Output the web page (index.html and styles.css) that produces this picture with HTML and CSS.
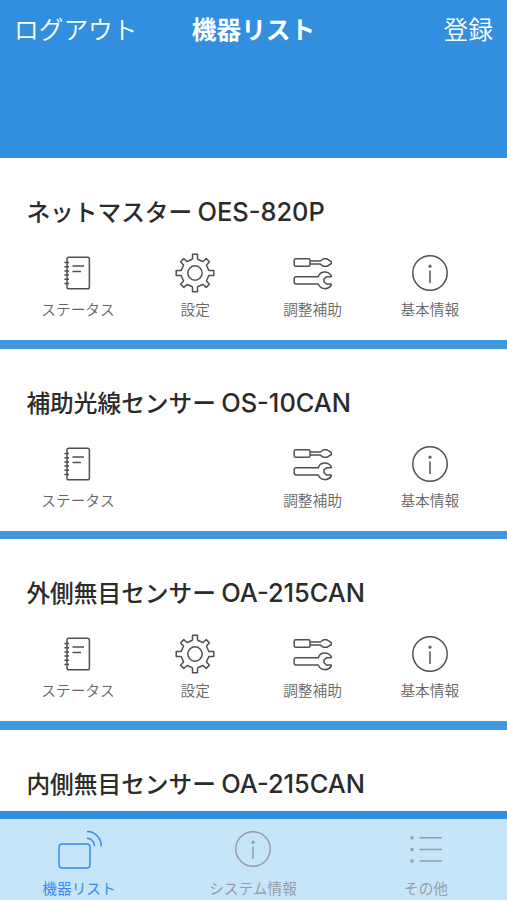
FILE: index.html
```
<!DOCTYPE html>
<html lang="ja">
<head>
<meta charset="utf-8">
<title>機器リスト</title>
<link rel="stylesheet" href="styles.css">
</head>
<body>
<svg class="defs" aria-hidden="true">
  <symbol id="note" viewBox="0 0 40 40">
    <rect x="9" y="4.2" width="22.4" height="31.6" rx="1.8"/>
    <path d="M6.400 9.5h4.6M6.400 13.7h4.6M6.400 17.9h4.6M6.400 22.1h4.6M6.400 26.3h4.6M6.400 30.5h4.6M14.5 13h11.500M14.5 18.500h8.500"/>
  </symbol>
  <symbol id="gear" viewBox="0 0 40 40">
    <g transform="translate(20 20)">
      <circle r="7.200"/>
      <path d="M-3.200-13.500L-2.500-14V-18.800H2.500V-14L3.200-13.500L7.200-11.700L8-11.500L11.200-14.400L14.400-11.200L11.500-8L11.700-7.200L13.500-3.200L14-2.500H18.800V2.500H14L13.500 3.200L11.700 7.200L11.500 8L14.400 11.200L11.200 14.400L8 11.500L7.200 11.700L3.200 13.500L2.500 14V18.800H-2.500V14L-3.200 13.500L-7.200 11.700L-8 11.500L-11.200 14.400L-14.400 11.200L-11.500 8L-11.700 7.200L-13.500 3.200L-14 2.500H-18.800V-2.500H-14L-13.500-3.200L-11.700-7.200L-11.500-8L-14.400-11.200L-11.200-14.400L-8-11.500L-7.200-11.700Z"/>
    </g>
  </symbol>
  <symbol id="tools" viewBox="0 0 40 40">
    <rect x="1.200" y="5.700" width="15.800" height="7.500" rx="1.500"/>
    <path d="M17 8H27.300L30.500 5.800H34L38.300 8.600V10.500L34 13.300H30.500L27.300 11.100H17"/>
    <path d="M3.200 23.800H25.300C27 18.200 34.500 17.200 38.200 22.500V23.800H33.500L31 25.800V28.800L33.500 31H38.200V32.200C34.500 37.400 27.500 36.500 25.300 31H3.200Q1.200 31 1.200 29V25.800Q1.200 23.800 3.200 23.800Z"/>
  </symbol>
  <symbol id="info" viewBox="0 0 40 40">
    <circle cx="20" cy="20" r="17.200"/>
    <path d="M20 17.500V30"/>
    <circle class="dot" cx="20" cy="13.200" r="1.600"/>
  </symbol>
  <symbol id="device" viewBox="0 0 50 44">
    <rect x="5" y="14.900" width="31" height="24" rx="3"/>
    <path d="M33 9.200C37 9.200 40.500 12.500 40.500 17.300M33 2.500C41 2.500 47.200 8.800 47.200 17.300"/>
  </symbol>
  <symbol id="list" viewBox="0 0 40 40">
    <path d="M13.500 8.700H36M13.500 20.400H36M13.500 32H36"/>
    <path class="dot" d="M4.500 7.200h3v3h-3zM4.500 18.900h3v3h-3zM4.500 30.500h3v3h-3z"/>
  </symbol>
</svg>
<div class="app">
  <header class="nav">
    <a class="nav-link">ログアウト</a>
    <h1 class="nav-title">機器リスト</h1>
    <a class="nav-link nav-right">登録</a>
  </header>
  <main class="cards">
    <section class="card">
      <h2 class="name">ネットマスター <span class="model">OES-820P</span></h2>
      <div class="actions">
        <div class="action"><svg class="icon"><use href="#note"/></svg><span>ステータス</span></div>
        <div class="action"><svg class="icon"><use href="#gear"/></svg><span>設定</span></div>
        <div class="action"><svg class="icon"><use href="#tools"/></svg><span>調整補助</span></div>
        <div class="action"><svg class="icon"><use href="#info"/></svg><span>基本情報</span></div>
      </div>
    </section>
    <section class="card">
      <h2 class="name">補助光線センサー <span class="model">OS-10CAN</span></h2>
      <div class="actions">
        <div class="action"><svg class="icon"><use href="#note"/></svg><span>ステータス</span></div>
        <div class="action"></div>
        <div class="action"><svg class="icon"><use href="#tools"/></svg><span>調整補助</span></div>
        <div class="action"><svg class="icon"><use href="#info"/></svg><span>基本情報</span></div>
      </div>
    </section>
    <section class="card">
      <h2 class="name">外側無目センサー <span class="model">OA-215CAN</span></h2>
      <div class="actions">
        <div class="action"><svg class="icon"><use href="#note"/></svg><span>ステータス</span></div>
        <div class="action"><svg class="icon"><use href="#gear"/></svg><span>設定</span></div>
        <div class="action"><svg class="icon"><use href="#tools"/></svg><span>調整補助</span></div>
        <div class="action"><svg class="icon"><use href="#info"/></svg><span>基本情報</span></div>
      </div>
    </section>
    <section class="card card-last">
      <h2 class="name">内側無目センサー <span class="model">OA-215CAN</span></h2>
    </section>
  </main>
  <footer class="tabs">
    <div class="tab tab-active"><svg class="tab-icon tab-icon-wide"><use href="#device"/></svg><span>機器リスト</span></div>
    <div class="tab"><svg class="tab-icon"><use href="#info"/></svg><span>システム情報</span></div>
    <div class="tab"><svg class="tab-icon"><use href="#list"/></svg><span>その他</span></div>
  </footer>
</div>
</body>
</html>
```
FILE: styles.css
```
* { box-sizing: border-box; }
body {
  margin: 0;
  font-family: "Noto Sans CJK JP", sans-serif;
  overflow: hidden;
}
.defs { display: none; }
.app {
  height: 900px;
  display: flex;
  flex-direction: column;
  background: #328fdf;
}
.nav {
  height: 158px;
  flex: none;
  display: grid;
  grid-template-columns: 1fr auto 1fr;
  align-items: start;
  padding: 10px 14px 0;
  line-height: 36px;
  color: #fff;
}
.nav-link {
  font-size: 24.7px;
  font-weight: 350;
}
.nav-right { text-align: right; }
.nav-title {
  margin: 0;
  font-size: 24.7px;
  font-weight: 700;
}
.cards {
  flex: none;
  display: flex;
  flex-direction: column;
  gap: 8.5px;
  background: #4298df;
}
.card {
  height: 182px;
  padding: 35px 18.6px 0 19.4px;
  background: #fff;
}
.card-last { height: 81.5px; }
.name {
  margin: 0;
  padding-left: 7px;
  font-size: 23.7px;
  font-weight: 500;
  line-height: 36px;
  color: #2b2b2b;
  white-space: nowrap;
}
.model {
  font-family: Inter, sans-serif;
  font-size: 25.4px;
  font-weight: 500;
}
.actions {
  display: grid;
  grid-template-columns: repeat(4, 1fr);
  padding-top: 23px;
}
.action {
  display: flex;
  flex-direction: column;
  align-items: center;
  gap: 5px;
  font-size: 14.7px;
  font-weight: 350;
  line-height: 22px;
  color: #666;
}
.icon, .tab-icon {
  width: 40px;
  height: 40px;
  fill: none;
  stroke: #505054;
  stroke-width: 1.5;
  stroke-linejoin: round;
}
.dot { fill: currentColor; stroke: none; }
.tabs {
  flex: 1;
  margin-top: 8px;
  display: grid;
  grid-template-columns: 158px 190px 1fr;
  padding-top: 10px;
  background: #c7e5f8;
}
.tab {
  display: flex;
  flex-direction: column;
  align-items: center;
  gap: 8px;
  font-size: 14.7px;
  line-height: 22px;
  color: #979ea4;
}
.tab:last-child { padding-right: 3px; }
.tab-icon { stroke: currentColor; }
.tab-icon-wide { width: 50px; height: 44px; margin-bottom: -4px; }
.tab-active { color: #3989f5; }
```
